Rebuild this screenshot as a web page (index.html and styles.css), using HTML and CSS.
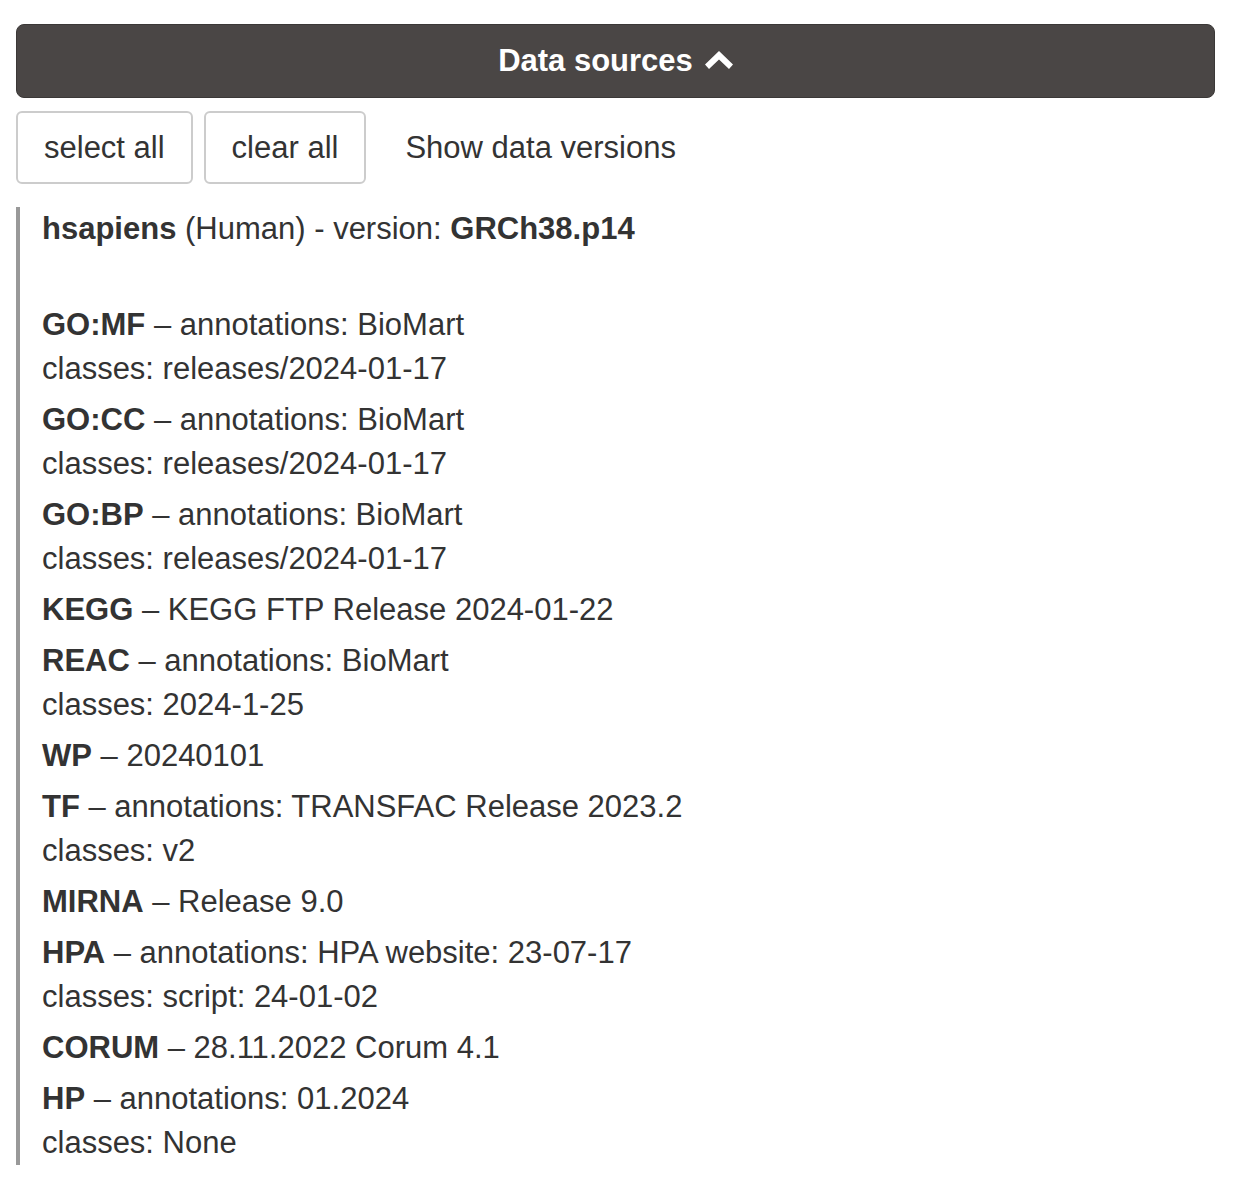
FILE: index.html
```html
<!DOCTYPE html>
<html>
<head>
<meta charset="utf-8">
<link rel="stylesheet" href="styles.css">
</head>
<body>
<div class="panel">
  <div class="panel-header">
    <span class="panel-title">Data sources</span>
    <svg class="chevron" width="28" height="18" viewBox="0 0 28 18"><polygon points="14,0 28,13.5 24,18 14,8.5 4,18 0,13.5" fill="#fff"/></svg>
  </div>
  <div class="toolbar">
    <button class="btn">select all</button>
    <button class="btn">clear all</button>
    <button class="btn btn-link">Show data versions</button>
  </div>
  <div class="versions">
    <div class="organism"><b>hsapiens</b> (Human) - version: <b>GRCh38.p14</b></div>
    <div class="spacer"></div>
    <div class="entry"><b>GO:MF</b> – annotations: BioMart<br>classes: releases/2024-01-17</div>
    <div class="entry"><b>GO:CC</b> – annotations: BioMart<br>classes: releases/2024-01-17</div>
    <div class="entry"><b>GO:BP</b> – annotations: BioMart<br>classes: releases/2024-01-17</div>
    <div class="entry"><b>KEGG</b> – KEGG FTP Release 2024-01-22</div>
    <div class="entry"><b>REAC</b> – annotations: BioMart<br>classes: 2024-1-25</div>
    <div class="entry"><b>WP</b> – 20240101</div>
    <div class="entry"><b>TF</b> – annotations: TRANSFAC Release 2023.2<br>classes: v2</div>
    <div class="entry"><b>MIRNA</b> – Release 9.0</div>
    <div class="entry"><b>HPA</b> – annotations: HPA website: 23-07-17<br>classes: script: 24-01-02</div>
    <div class="entry"><b>CORUM</b> – 28.11.2022 Corum 4.1</div>
    <div class="entry"><b>HP</b> – annotations: 01.2024<br>classes: None</div>
  </div>
</div>
</body>
</html>
```

FILE: styles.css
```css
html, body {
  margin: 0;
  padding: 0;
  background: #fff;
}
body {
  font-family: "Liberation Sans", Arial, Helvetica, sans-serif;
  font-size: 31px;
  color: #333;
}
.panel {
  margin: 24px 0 0 16px;
  width: 1199px;
}
.panel-header {
  box-sizing: border-box;
  height: 74px;
  background: #4a4645;
  border: 1px solid #3b3837;
  border-radius: 8px;
  display: flex;
  align-items: center;
  justify-content: center;
  gap: 12px;
  color: #fff;
}
.panel-title {
  font-weight: bold;
}
.chevron {
  display: block;
  margin-top: -2px;
}
.toolbar {
  display: flex;
  gap: 11px;
  margin-top: 13px;
}
.btn {
  box-sizing: border-box;
  height: 73px;
  padding: 0 26px;
  border: 2px solid #ccc;
  border-radius: 6px;
  background: #fff;
  font-family: inherit;
  font-size: 31px;
  color: #333;
}
.btn-link {
  border-color: transparent;
  background: transparent;
}
.versions {
  margin-top: 23px;
  border-left: 4px solid #999;
  padding-left: 22px;
  line-height: 44px;
}
.organism {
  height: 44px;
}
.spacer {
  height: 52px;
}
.entry + .entry {
  margin-top: 7px;
}
b {
  font-weight: bold;
}
```
